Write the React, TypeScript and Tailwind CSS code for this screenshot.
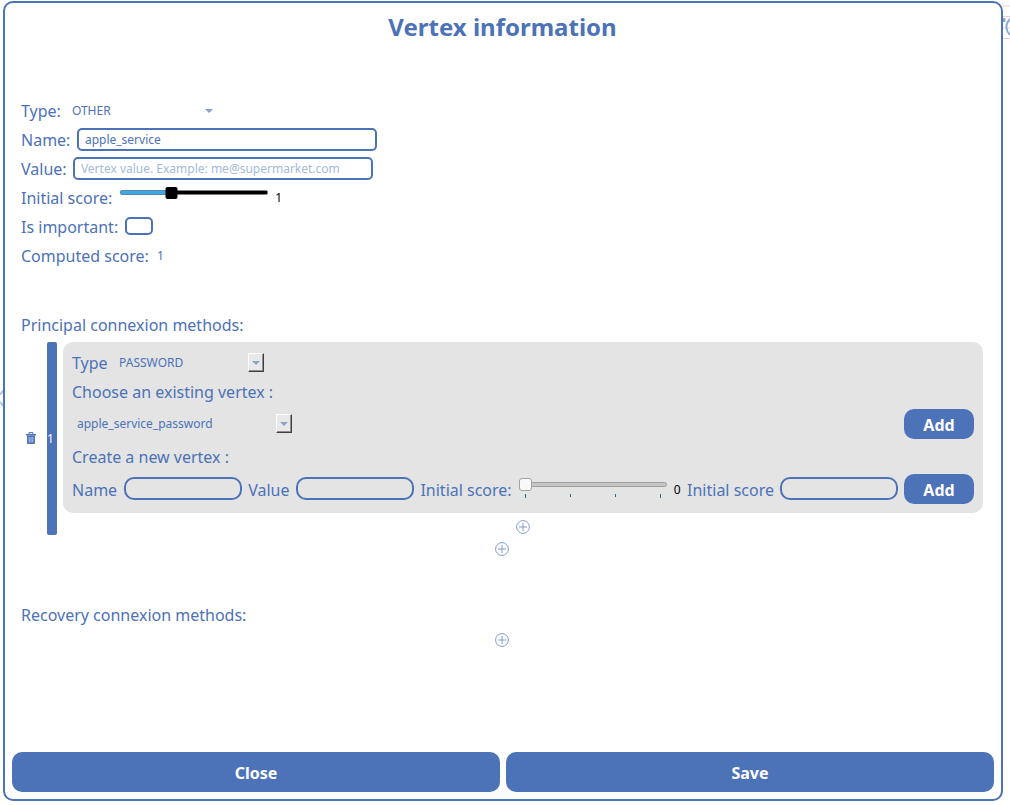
import React from "react";

const PlusCircle = () => (
  <svg className="block" width="14" height="14" viewBox="0 0 14 14" fill="none">
    <circle cx="7" cy="7" r="6.4" stroke="#7f9ad1" strokeWidth="1" />
    <path d="M7 3v8M3 7h8" stroke="#7f9ad1" />
  </svg>
);

const Caret = () => (
  <svg className="block" width="8" height="4" viewBox="0 0 8 4">
    <path d="M0 0h8L4 4z" fill="#89a2d2" />
  </svg>
);

const SelectButton = () => (
  <span className="flex h-[19px] w-4 items-center justify-center border border-t-white border-r-[#404040] border-b-[#404040] border-l-white bg-[#e9e9e9] shadow-[inset_-1px_-1px_0_#8f8f8f]">
    <Caret />
  </span>
);

const Trash = () => (
  <svg className="block" width="10" height="12" viewBox="0 0 10 12">
    <path d="M0 2h10v1.500H0z" fill="#4c72b8" />
    <path d="M3 2V.6h4V2" fill="none" stroke="#4c72b8" />
    <path d="M1 3.500h8v7.500q0 1-1 1H2q-1 0-1-1z" fill="#4c72b8" />
    <path d="M3.200 5v5.500M5 5v5.500M6.800 5v5.500" stroke="#b4c5e6" />
  </svg>
);

const Row = ({ children }: { children: React.ReactNode }) => (
  <div className="flex h-[29px] items-start leading-[31px] whitespace-pre">{children}</div>
);

const AddButton = () => (
  <button className="block h-[30px] w-[70px] rounded-[10px] bg-[#4c72b8] pt-[2px] text-base leading-[28px] font-bold text-white">
    Add
  </button>
);

const SmallInput = () => (
  <input className="mt-[3px] h-[23px] w-[118px] rounded-[10px] border-2 border-[#4c72b8] bg-transparent px-2 text-xs outline-none" />
);

export default function App() {
  return (
    <div className="flex h-[805px] w-[1010px] items-start overflow-hidden bg-white font-['Noto_Sans',sans-serif] text-base text-[#4c72b8]">
      <svg className="mt-[389px] block shrink-0" width="3" height="19" viewBox="0 0 3 19">
        <path d="M4 1L0 5.500M0 13L4 17.500" fill="none" stroke="#b0c3e2" strokeWidth="2" />
      </svg>
      <main className="mt-px flex h-[800px] w-[1000px] shrink-0 flex-col rounded-[10px] border-2 border-[#4c72b8] bg-white">
        <h1 className="mt-2 h-[84px] pr-px text-center text-2xl leading-8 font-bold">Vertex information</h1>

        <section className="mt-px h-[214px] pl-4">
          <Row>
            <span>Type:</span>
            <span className="ml-[11px] w-[133px] text-xs leading-[30px]">OTHER</span>
            <span className="mt-[13px]"><Caret /></span>
          </Row>
          <Row>
            <label>Name:</label>
            <input
              defaultValue="apple_service"
              className="mt-[3px] ml-[7px] h-[23px] w-[300px] rounded-[5px] border-2 border-[#4c72b8] px-[5.5px] text-xs outline-none"
            />
          </Row>
          <Row>
            <label>Value:</label>
            <input
              placeholder="Vertex value. Example: me@supermarket.com"
              className="mt-[3px] ml-[6px] h-[23px] w-[300px] rounded-[5px] border-2 border-[#4c72b8] px-[6.3px] text-xs outline-none placeholder:text-[#a6b9dc]"
            />
          </Row>
          <Row>
            <span>Initial score:</span>
            <svg className="mt-[4px] ml-[8px] block" width="148" height="13" viewBox="0 0 148 13">
              <rect x="0.500" y="3.500" width="50" height="4" rx="1" fill="#3fa7e5" stroke="#568aa8" />
              <rect x="50" y="3.500" width="97.500" height="4" rx="1" fill="#000" />
              <rect x="45.500" y="0" width="12" height="12" rx="2" fill="#000" />
            </svg>
            <span className="ml-[7px] text-xs leading-[29px] text-black">1</span>
          </Row>
          <Row>
            <span>Is important:</span>
            <span className="mt-[5px] ml-[7px] h-[18px] w-7 rounded-[5px] border-2 border-[#4c72b8]" />
          </Row>
          <Row>
            <span>Computed score:</span>
            <span className="ml-[8px] text-xs leading-[30px]">1</span>
          </Row>
        </section>

        <section className="h-[290px] pl-4">
          <div className="h-[32px] leading-[31px]">Principal connexion methods:</div>
          <div className="flex h-[193px]">
            <div className="w-[26px] pt-[90px] pl-[5px]"><Trash /></div>
            <div className="flex w-[10px] items-center justify-start rounded-[2px] bg-[#4c72b8] text-xs text-white">1</div>
            <div className="ml-[6px] w-[920px]">
              <div className="h-[171px] rounded-[10px] bg-[#e4e4e4] pt-[7px] pr-[9px] pl-[9px] whitespace-pre">
                <div className="flex h-[29px] leading-[29px]">
                  <span>Type</span>
                  <span className="ml-[11.5px] w-[128.5px] text-xs leading-[27px]">PASSWORD</span>
                  <span className="pt-[4px]"><SelectButton /></span>
                </div>
                <div className="h-[29px] leading-[29px]">Choose an existing vertex :</div>
                <div className="flex h-[36px] items-start pt-[2px]">
                  <span className="ml-[5px] w-[199px] text-xs leading-[30px]">apple_service_password</span>
                  <span className="pt-[5px]"><SelectButton /></span>
                  <span className="ml-auto"><AddButton /></span>
                </div>
                <div className="h-[29px] leading-[29px]">Create a new vertex :</div>
                <div className="flex h-[32px] items-start pt-[2px] leading-[33px]">
                  <span className="mr-[7px]">Name</span>
                  <SmallInput />
                  <span className="mr-[7px] ml-[6px]">Value</span>
                  <SmallInput />
                  <span className="ml-[6px]">Initial score:</span>
                  <svg className="mt-[3px] ml-[6px] block" width="149" height="22" viewBox="0 0 149 22">
                    <rect x="1.500" y="5.500" width="147" height="4" rx="2" fill="#c5c5c5" stroke="#a0a0a0" />
                    <rect x="1.500" y="1.500" width="12" height="12" rx="2.500" fill="#f8f8f8" stroke="#a3a3a3" />
                    <path d="M7.500 17v4M52.500 17v3M97.500 17v3M142.500 17v4" stroke="#23688f" />
                  </svg>
                  <span className="ml-[7px] text-xs leading-[32px] text-black">0</span>
                  <span className="mr-[6px] ml-auto">Initial score</span>
                  <SmallInput />
                  <span className="ml-[6px]"><AddButton /></span>
                </div>
              </div>
              <div className="flex justify-center pt-[7px]"><PlusCircle /></div>
            </div>
          </div>
          <div className="mt-[7px] ml-[474px]"><PlusCircle /></div>
        </section>

        <section className="h-[152px] pl-4">
          <div className="h-[33px] leading-[31px]">Recovery connexion methods:</div>
          <div className="ml-[474px]"><PlusCircle /></div>
        </section>

        <footer className="flex gap-[6px] pl-[7px] text-base font-bold text-white">
          <button className="h-10 w-[488px] rounded-[10px] bg-[#4c72b8] pt-[2px]">Close</button>
          <button className="h-10 w-[488px] rounded-[10px] bg-[#4c72b8] pt-[2px]">Save</button>
        </footer>
      </main>
      <svg className="block shrink-0" width="7" height="50" viewBox="0 0 7 50">
        <path d="M0 6h7M0 16.500h7M0 28h7M0 38.500h7" stroke="#f6cbd2" />
        <path d="M0 18h2.500v4H0z" fill="#8eabd5" />
        <path d="M7 19q-4 4-3.500 9 .5 4 3.500 7" fill="none" stroke="#8eabd5" strokeWidth="2" />
      </svg>
    </div>
  );
}
